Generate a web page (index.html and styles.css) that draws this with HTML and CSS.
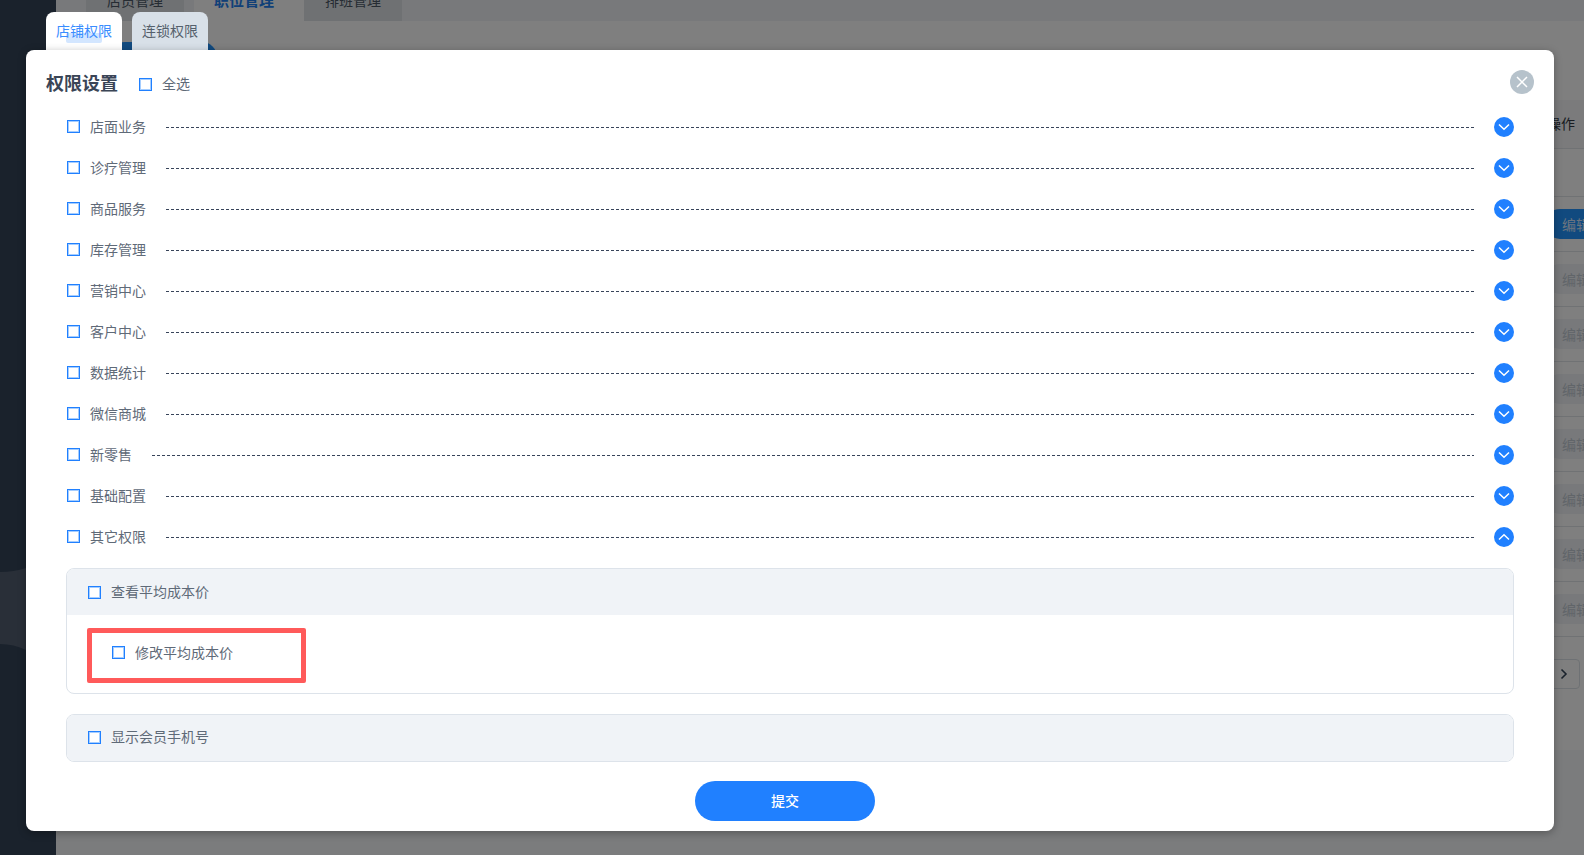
FILE: index.html
```html
<!DOCTYPE html>
<html lang="zh-CN">
<head>
<meta charset="utf-8">
<title>权限设置</title>
<link rel="stylesheet" href="styles.css">
</head>
<body>
<div class="app">
  <aside class="sidebar">
    <svg class="side-glow" width="56" height="100" viewBox="0 0 56 100"><path d="M0 12Q14 12 26 8L56 2V100L26 90Q14 84 0 84Z" fill="#525e70"/></svg>
  </aside>
  <main class="main">
    <nav class="topbar">
      <div class="top-tab">店员管理</div>
      <div class="top-tab active">职位管理</div>
      <div class="top-tab">排班管理</div>
    </nav>
    <section class="card">
      <div class="toolbar"><span class="add-btn"></span></div>
      <div class="t-head"><span>操作</span></div>
      <div class="t-row t-first"></div>
      <div class="t-row"><span class="edit primary">编辑</span></div>
      <div class="t-row"><span class="edit">编辑</span></div>
      <div class="t-row"><span class="edit">编辑</span></div>
      <div class="t-row"><span class="edit">编辑</span></div>
      <div class="t-row"><span class="edit">编辑</span></div>
      <div class="t-row"><span class="edit">编辑</span></div>
      <div class="t-row"><span class="edit">编辑</span></div>
      <div class="t-row"><span class="edit">编辑</span></div>
      <div class="pager"><span class="page-next"><svg width="8" height="12" viewBox="0 0 8 12"><path d="M1.5 1.5L6 6L1.5 10.5" fill="none" stroke="#344458" stroke-width="1.6"/></svg></span></div>
    </section>
  </main>
</div>
<div class="overlay">
  <div class="dialog">
    <div class="tabs">
      <div class="tab current"><span class="tab-mark"></span><span class="tab-text">店铺权限</span></div>
      <div class="tab">连锁权限</div>
    </div>
    <div class="panel">
      <button class="close" type="button" aria-label="关闭"><svg width="12" height="12" viewBox="0 0 12 12"><path d="M1 1L11 11M11 1L1 11" stroke="#fff" stroke-width="1.5" fill="none"/></svg></button>
      <header class="head">
        <h2 class="title">权限设置</h2>
        <label class="check"><i class="box"></i>全选</label>
      </header>
      <ul class="perm-list">
        <li class="perm"><label class="check"><i class="box"></i>店面业务</label><span class="dash"></span><span class="toggle"><svg width="12" height="8" viewBox="0 0 12 8"><path d="M1 1.5L6 6.2L11 1.5" fill="none" stroke="#fff" stroke-width="1.5"/></svg></span></li>
        <li class="perm"><label class="check"><i class="box"></i>诊疗管理</label><span class="dash"></span><span class="toggle"><svg width="12" height="8" viewBox="0 0 12 8"><path d="M1 1.5L6 6.2L11 1.5" fill="none" stroke="#fff" stroke-width="1.5"/></svg></span></li>
        <li class="perm"><label class="check"><i class="box"></i>商品服务</label><span class="dash"></span><span class="toggle"><svg width="12" height="8" viewBox="0 0 12 8"><path d="M1 1.5L6 6.2L11 1.5" fill="none" stroke="#fff" stroke-width="1.5"/></svg></span></li>
        <li class="perm"><label class="check"><i class="box"></i>库存管理</label><span class="dash"></span><span class="toggle"><svg width="12" height="8" viewBox="0 0 12 8"><path d="M1 1.5L6 6.2L11 1.5" fill="none" stroke="#fff" stroke-width="1.5"/></svg></span></li>
        <li class="perm"><label class="check"><i class="box"></i>营销中心</label><span class="dash"></span><span class="toggle"><svg width="12" height="8" viewBox="0 0 12 8"><path d="M1 1.5L6 6.2L11 1.5" fill="none" stroke="#fff" stroke-width="1.5"/></svg></span></li>
        <li class="perm"><label class="check"><i class="box"></i>客户中心</label><span class="dash"></span><span class="toggle"><svg width="12" height="8" viewBox="0 0 12 8"><path d="M1 1.5L6 6.2L11 1.5" fill="none" stroke="#fff" stroke-width="1.5"/></svg></span></li>
        <li class="perm"><label class="check"><i class="box"></i>数据统计</label><span class="dash"></span><span class="toggle"><svg width="12" height="8" viewBox="0 0 12 8"><path d="M1 1.5L6 6.2L11 1.5" fill="none" stroke="#fff" stroke-width="1.5"/></svg></span></li>
        <li class="perm"><label class="check"><i class="box"></i>微信商城</label><span class="dash"></span><span class="toggle"><svg width="12" height="8" viewBox="0 0 12 8"><path d="M1 1.5L6 6.2L11 1.5" fill="none" stroke="#fff" stroke-width="1.5"/></svg></span></li>
        <li class="perm"><label class="check"><i class="box"></i>新零售</label><span class="dash"></span><span class="toggle"><svg width="12" height="8" viewBox="0 0 12 8"><path d="M1 1.5L6 6.2L11 1.5" fill="none" stroke="#fff" stroke-width="1.5"/></svg></span></li>
        <li class="perm"><label class="check"><i class="box"></i>基础配置</label><span class="dash"></span><span class="toggle"><svg width="12" height="8" viewBox="0 0 12 8"><path d="M1 1.5L6 6.2L11 1.5" fill="none" stroke="#fff" stroke-width="1.5"/></svg></span></li>
        <li class="perm"><label class="check"><i class="box"></i>其它权限</label><span class="dash"></span><span class="toggle"><svg width="12" height="8" viewBox="0 0 12 8"><path d="M1 6.5L6 1.8L11 6.5" fill="none" stroke="#fff" stroke-width="1.5"/></svg></span></li>
      </ul>
      <div class="group open">
        <div class="group-head"><label class="check"><i class="box"></i>查看平均成本价</label></div>
        <div class="group-body">
          <div class="mark-box"><label class="check"><i class="box"></i>修改平均成本价</label></div>
        </div>
      </div>
      <div class="group solo">
        <div class="group-head"><label class="check"><i class="box"></i>显示会员手机号</label></div>
      </div>
      <div class="foot"><button class="submit" type="button">提交</button></div>
    </div>
  </div>
</div>
</body>
</html>
```

FILE: styles.css
```css
* { box-sizing: border-box; }
html, body { margin: 0; padding: 0; height: 100%; }
body {
  width: 1584px;
  height: 855px;
  overflow: hidden;
  position: relative;
  font-family: "Noto Sans CJK SC", "Noto Sans", sans-serif;
  font-size: 14px;
  color: #5f6a78;
}
.app { display: flex; height: 855px; overflow: hidden; background: #f6f8fb; }
.sidebar { flex: 0 0 56px; background: #344458; padding-top: 560px; }
.side-glow { display: block; }
.main { flex: 1; min-width: 0; overflow: hidden; }
.topbar { display: flex; height: 21px; padding-left: 30px; background: #f0f3f6; overflow: hidden; }
.top-tab {
  flex: 0 0 98px;
  height: 42px;
  margin-top: -21px;
  margin-right: 10px;
  line-height: 42px;
  text-align: center;
  background: #dee3e7;
  color: #4c5866;
}
.top-tab.active { flex-basis: 100px; background: #fff; color: #2080f0; font-size: 15px; font-weight: 700; box-shadow: 10px 0 0 #fff; }
.card { height: 729px; background: #fff; }
.toolbar { height: 30px; padding: 21px 0 0 54px; box-sizing: content-box; display: flex; }
.add-btn { width: 107px; height: 30px; border-radius: 15px; background: #2294ff; }
.t-head { margin-top: 28px; height: 48px; background: #f6f7f9; padding-left: 1491px; line-height: 46px; color: #333a44; }
.t-row { height: 55px; border-top: 1px solid #e1e4e8; padding: 12px 0 0 1489px; }
.t-first { height: 48px; }
.edit { display: block; width: 70px; height: 30px; padding-left: 17px; line-height: 30px; border-radius: 15px; background: #f0f2f6; color: #c2cad3; white-space: nowrap; }
.edit.primary { background: #2294ff; color: #d6e8ff; }
.pager { border-top: 1px solid #e1e4e8; padding: 22px 4px 0 1489px; }
.page-next { display: flex; align-items: center; justify-content: flex-end; width: 35px; height: 30px; padding-right: 11px; border: 1px solid #dde2e8; border-radius: 4px; background: #fff; }

.overlay { position: absolute; inset: 0; background: rgba(0, 0, 0, .5); }
.dialog { position: absolute; left: 26px; top: 12px; width: 1528px; height: 819px; display: flex; flex-direction: column; }
.tabs { display: flex; gap: 10px; height: 38px; padding-left: 20px; }
.tab {
  width: 76px;
  height: 38px;
  line-height: 36px;
  text-align: center;
  border-radius: 8px 8px 0 0;
  background: #d8e0e8;
  color: #55606c;
  position: relative;
}
.tab.current { background: #fff; color: #3a8dff; }
.tab-mark { position: absolute; left: 20px; top: 21px; width: 36px; height: 10px; border-radius: 2px; background: #d3e6ff; }
.tab-text { position: relative; }
.panel {
  position: relative;
  flex: 1;
  background: #fff;
  border-radius: 8px;
  box-shadow: 0 2px 8px rgba(0, 0, 0, .3);
  padding: 19px 30px 0 20px;
}
.close {
  position: absolute;
  right: 20px;
  top: 20px;
  width: 24px;
  height: 24px;
  padding: 0;
  border: 0;
  border-radius: 50%;
  background: #b6c2cb;
  display: flex;
  align-items: center;
  justify-content: center;
}
.head { display: flex; align-items: center; gap: 20px; height: 26px; margin-bottom: 12px; }
.head .check { margin-top: 4px; }
.title { margin: 0; font-size: 18px; font-weight: 700; line-height: 26px; color: #3a4556; }
.check { display: inline-flex; align-items: center; gap: 10px; line-height: 20px; padding: 0 0 2px 1px; }
.box { display: block; flex: none; width: 13px; height: 13px; margin-top: 2px; border: 1px solid #2080ff; background: #fff; box-shadow: inset 0 0 0 1px #a5cdff; }
.perm .box { margin-top: 1px; }
.perm-list { list-style: none; margin: 0 10px 0 20px; padding: 0; display: flex; flex-direction: column; gap: 1px; }
.perm { display: flex; align-items: center; height: 40px; gap: 20px; }
.perm .check { flex: none; }
.dash { flex: 1; height: 1px; background: repeating-linear-gradient(90deg, #38445a 0 3px, transparent 3px 5px); }
.toggle { flex: none; width: 20px; height: 20px; border-radius: 50%; background: #2080ff; display: flex; align-items: center; justify-content: center; }
.group { margin: 11px 10px 0 20px; border: 1px solid #dde3ea; border-radius: 8px; overflow: hidden; }
.group-head { height: 46px; padding: 0 20px; display: flex; align-items: center; background: #f0f3f7; }
.group-body { height: 78px; padding: 13px 20px 0; }
.mark-box { width: 219px; height: 55px; border: 5px solid #ff5a5a; border-radius: 2px; padding: 9px 0 0 19px; }
.mark-box .box { margin-top: 0; }
.group.solo { margin-top: 20px; height: 48px; }
.solo .group-head { padding-bottom: 2px; }
.foot { display: flex; justify-content: center; margin-top: 19px; }
.submit {
  width: 180px;
  height: 40px;
  padding: 0 0 2px;
  border: 0;
  border-radius: 20px;
  background: #2080ff;
  color: #fff;
  font: 500 14px "Noto Sans CJK SC", "Noto Sans", sans-serif;
}
```
